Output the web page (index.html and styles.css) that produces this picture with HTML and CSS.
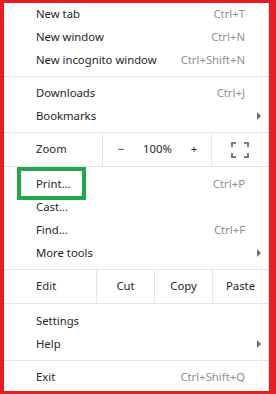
FILE: index.html
```html
<!DOCTYPE html>
<html lang="en">
<head>
  <meta charset="UTF-8">
  <title>Menu</title>
  <link rel="stylesheet" href="styles.css">
</head>
<body>
  <div class="menu">
    <div class="item"><span class="label">New tab</span><span class="key">Ctrl+T</span></div>
    <div class="item"><span class="label">New window</span><span class="key">Ctrl+N</span></div>
    <div class="item"><span class="label">New incognito window</span><span class="key">Ctrl+Shift+N</span></div>
    <div class="sep"></div>
    <div class="item"><span class="label">Downloads</span><span class="key">Ctrl+J</span></div>
    <div class="item sub"><span class="label">Bookmarks</span><span class="arrow"></span></div>

    <div class="bar">
      <div class="bar-label">Zoom</div>
      <div class="zoom-ctrl">
        <span class="zoom-btn">&minus;</span>
        <span class="zoom-val">100%</span>
        <span class="zoom-btn">+</span>
      </div>
      <div class="full">
        <svg width="18" height="16" viewBox="0 0 18 16">
          <path d="M1 5V1H5M13 1H17V5M17 11V15H13M5 15H1V11" fill="none" stroke="#7a7a7a" stroke-width="2"/>
        </svg>
      </div>
    </div>

    <div class="item print"><span class="label">Print...</span><span class="key">Ctrl+P</span><span class="mark"></span></div>
    <div class="item"><span class="label">Cast...</span></div>
    <div class="item"><span class="label">Find...</span><span class="key">Ctrl+F</span></div>
    <div class="item sub"><span class="label">More tools</span><span class="arrow"></span></div>

    <div class="bar edit">
      <div class="bar-label">Edit</div>
      <div class="cell">Cut</div>
      <div class="cell">Copy</div>
      <div class="cell">Paste</div>
    </div>

    <div class="item"><span class="label">Settings</span></div>
    <div class="item sub"><span class="label">Help</span><span class="arrow"></span></div>
    <div class="sep"></div>
    <div class="item"><span class="label">Exit</span><span class="key">Ctrl+Shift+Q</span></div>
  </div>
</body>
</html>
```

FILE: styles.css
```css
html,
body {
  margin: 0;
  height: 100%;
}

body {
  background-color: #e81c25;
  padding: 3px 7px 3px 4px;
  box-sizing: border-box;
  font-family: "Noto Sans", "Open Sans", sans-serif;
  font-size: 11.3px;
  color: #262626;
}

.menu {
  height: 100%;
  background-color: #fff;
  border-right: 1px solid #dcdcdc;
  box-sizing: border-box;
}

.item {
  position: relative;
  display: flex;
  align-items: center;
  height: 23px;
  padding: 0 23px 2px 32px;
  box-sizing: border-box;
}

.label {
  flex: 1;
}

.key {
  color: #8f8f8f;
}

.sub {
  padding-right: 7px;
}

.arrow {
  width: 0;
  height: 0;
  border-top: 4px solid transparent;
  border-bottom: 4px solid transparent;
  border-left: 4px solid #6e6e6e;
}

.sep {
  height: 1px;
  margin: 4px 0 5px;
  background-color: #e6e6e6;
}

.bar {
  display: flex;
  height: 35px;
  margin: 4px 0 6px;
  border-top: 1px solid #e6e6e6;
  border-bottom: 1px solid #e6e6e6;
  box-sizing: border-box;
}

.bar-label {
  display: flex;
  align-items: center;
  width: 66px;
  padding: 0 0 2px 32px;
}

.zoom-ctrl {
  display: flex;
  align-items: center;
  justify-content: space-between;
  width: 110px;
  padding: 0 12px 2px 13px;
  box-sizing: border-box;
  border-left: 1px solid #e6e6e6;
  border-right: 1px solid #e6e6e6;
}

.zoom-btn {
  width: 10px;
  text-align: center;
}

.full {
  flex: 1;
  display: flex;
  align-items: center;
  justify-content: center;
}

.edit .bar-label {
  width: 60px;
}

.cell {
  display: flex;
  align-items: center;
  justify-content: center;
  width: 57px;
  padding-bottom: 2px;
  border-left: 1px solid #e6e6e6;
}

.edit .cell:last-child {
  flex: 1;
}

/* green highlight around Print */
.mark {
  position: absolute;
  left: 13px;
  top: -6px;
  width: 61px;
  height: 25px;
  border: 4px solid #22a74a;
}
```
